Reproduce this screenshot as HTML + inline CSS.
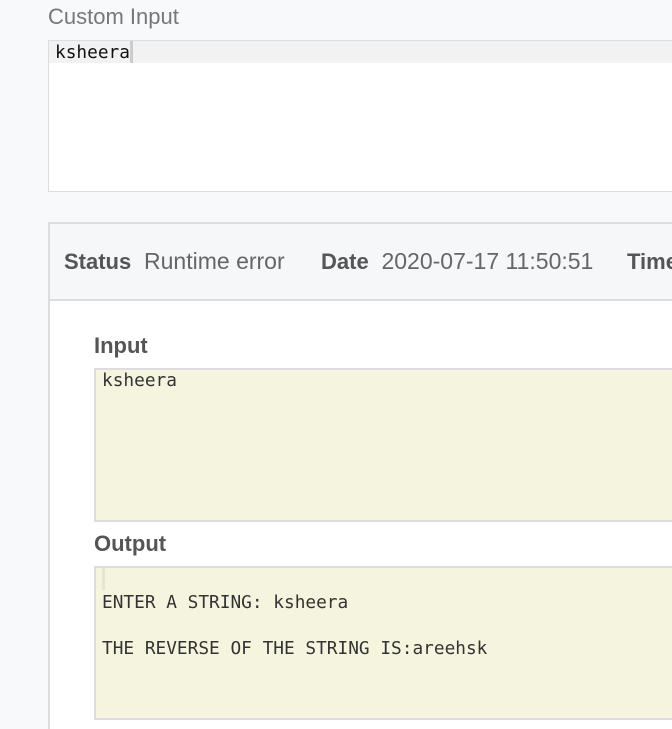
<!DOCTYPE html>
<html style="overflow:hidden;height:729px;"><head><style>
body{margin:0;width:672px;height:729px;overflow:hidden;background:#f8f9fa;position:relative;font-family:"Liberation Sans",Arial,sans-serif;}
.a{position:absolute;}
.mono{font-family:"DejaVu Sans Mono",monospace;font-size:17.8px;color:#333;white-space:pre;}
.lbl{font-weight:bold;font-size:22px;color:#555;}
.hd{font-size:23px;color:#666;}
.hd b{color:#555;font-size:22px;}
</style></head><body>
<div class="a" style="left:48px;top:4px;font-size:22px;color:#777;">Custom Input</div>
<div class="a" style="left:48px;top:40px;width:640px;height:150px;background:#fff;border:1px solid #ddd;"></div>
<div class="a" style="left:49px;top:41px;width:640px;height:22px;background:#f2f2f2;"></div>
<div class="a mono" style="left:55px;top:42px;line-height:22px;color:#111;">ksheera</div>
<div class="a" style="left:130px;top:41px;width:3px;height:22px;background:#ccc;"></div>

<div class="a" style="left:48px;top:222px;width:640px;height:505px;background:#fff;border:2px solid #ddd;border-bottom:none;"></div>
<div class="a" style="left:50px;top:224px;width:640px;height:75px;background:#f5f7f9;border-bottom:2px solid #ddd;"></div>
<div class="a hd" style="left:64px;top:248px;"><b>Status</b>&nbsp;&nbsp;Runtime error</div>
<div class="a hd" style="left:321px;top:248px;"><b>Date</b>&nbsp;&nbsp;2020-07-17 11:50:51</div>
<div class="a hd" style="left:627px;top:248px;"><b>Time</b></div>

<div class="a lbl" style="left:94px;top:333px;">Input</div>
<div class="a" style="left:94px;top:368px;width:600px;height:150px;background:#f5f4de;border:2px solid #ddd;"></div>
<div class="a mono" style="left:102px;top:370px;line-height:22px;">ksheera</div>

<div class="a lbl" style="left:94px;top:531px;">Output</div>
<div class="a" style="left:94px;top:566px;width:600px;height:150px;background:#f5f4de;border:2px solid #ddd;"></div>
<div class="a" style="left:102px;top:568px;width:3px;height:22px;background:#e6e5cf;"></div>
<div class="a mono" style="left:102px;top:591px;line-height:23px;">ENTER A STRING: ksheera

THE REVERSE OF THE STRING IS:areehsk</div>
</body></html>
